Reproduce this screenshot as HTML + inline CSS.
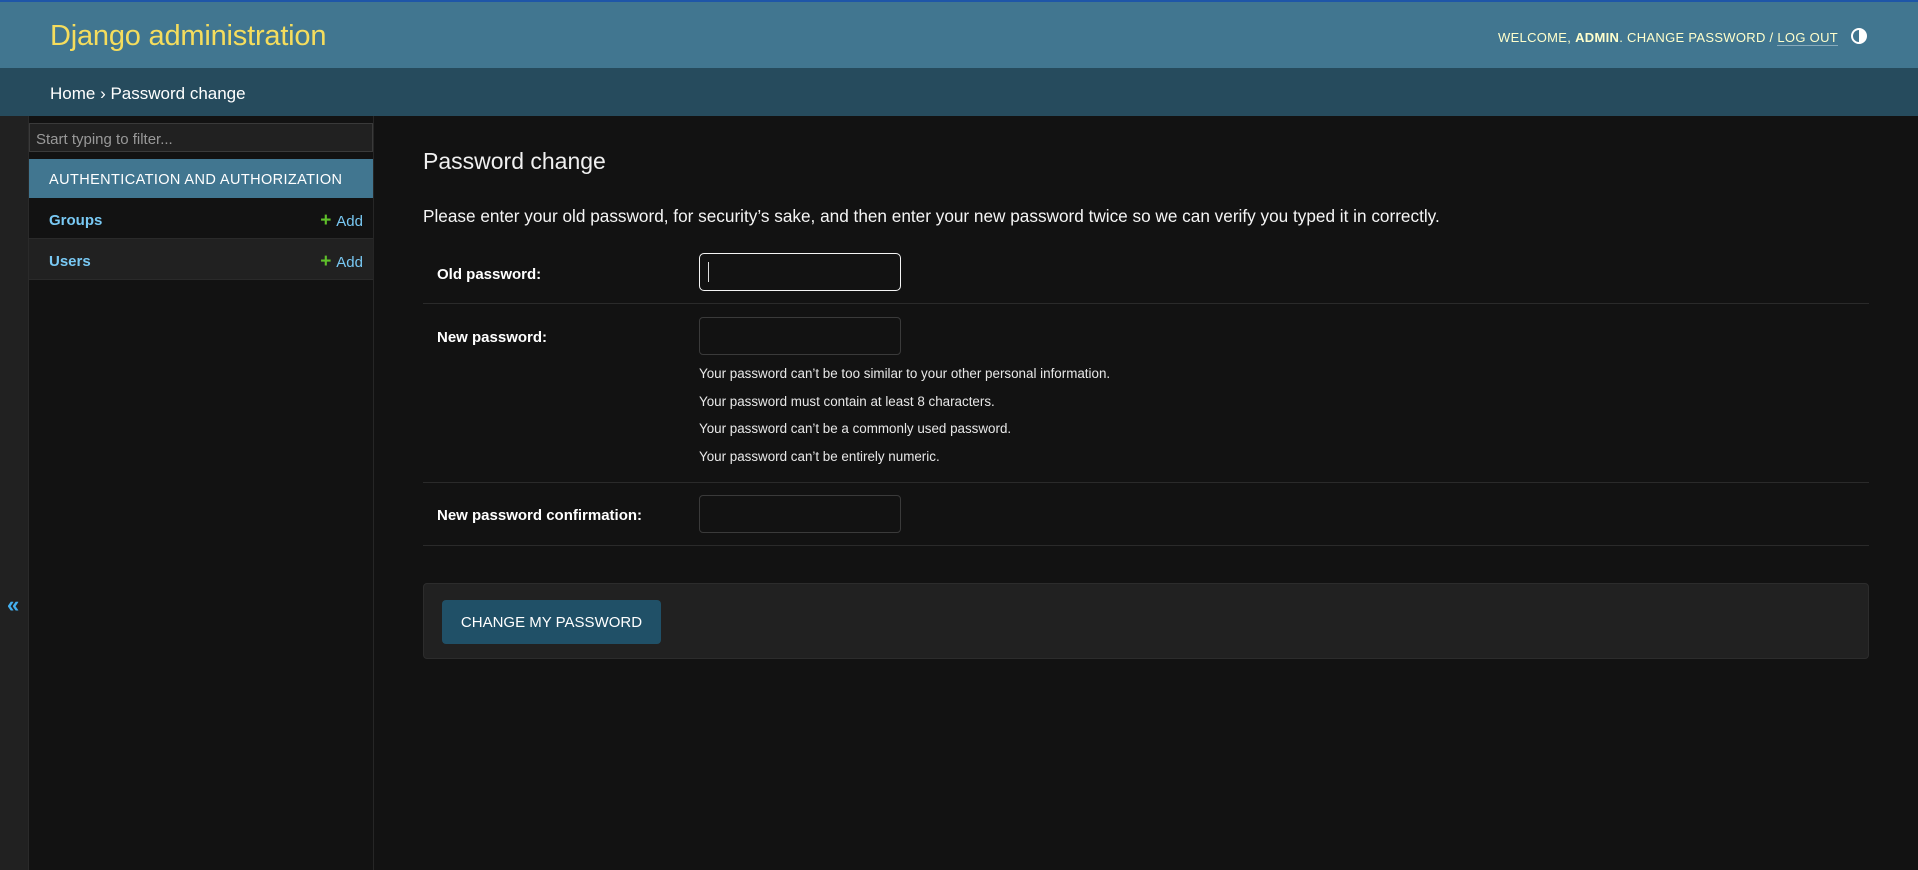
<!DOCTYPE html>
<html><head><meta charset="utf-8"><style>
*{box-sizing:border-box;margin:0;padding:0}
body{width:1918px;height:870px;background:#121212;font-family:"Liberation Sans",sans-serif;color:#eee;position:relative;overflow:hidden}
.topline{position:absolute;left:0;top:0;width:1918px;height:2px;background:#1e56a8}
.header{position:absolute;left:0;top:2px;width:1918px;height:66px;background:#417690}
.title{position:absolute;left:50px;top:18px;font-size:29px;color:#f5dd5d;letter-spacing:-0.2px}
.tools{position:absolute;right:80px;top:28px;font-size:13px;color:#ffffcc;letter-spacing:0.3px}
.tools b{font-weight:bold}
.tools u{text-decoration:none;border-bottom:1px solid #8ab}
.theme{position:absolute;left:1851px;top:28px;width:16px;height:16px;border-radius:50%;border:2px solid #fff;background:linear-gradient(90deg,#417690 50%,#fff 50%)}
.crumbs{position:absolute;left:0;top:68px;width:1918px;height:48px;background:#264b5d;font-size:17px;color:#fff;padding:16px 0 0 50px}
.toggle{position:absolute;left:0;top:116px;width:29px;height:754px;background:#212121;border-right:1px solid #2a2a2a}
.toggle span{position:absolute;left:7px;top:476px;color:#44b0f0;font-size:22px;font-weight:bold}
.nav{position:absolute;left:29px;top:116px;width:345px;height:754px;border-right:1px solid #262626}
.filter{position:absolute;left:0;top:7px;width:344px;height:29px;border:1px solid #3a3a3a;background:#212121;color:#999;font-size:15px;padding:7px 6px 0}
.cap{position:absolute;left:0;top:43px;width:344px;height:39px;background:#417690;color:#fff;font-size:14.5px;padding:13px 0 0 20px;letter-spacing:0.4px}
.row{position:absolute;left:0;width:344px;height:41px;border-bottom:1px solid #2a2a2a;font-size:15px}
.row .n{position:absolute;left:20px;top:14px;color:#79c9f4;font-weight:bold}
.row .a{position:absolute;right:10px;top:12px;color:#79c9f4}
.row .a b{color:#5fc02a;font-size:19px;margin-right:5px}
.h1{position:absolute;left:423px;top:148px;font-size:23px;font-weight:300;color:#f0f0f0}
.p{position:absolute;left:423px;top:206px;font-size:17.2px;color:#f5f5f5}
.frow{position:absolute;left:423px;width:1446px;border-bottom:1px solid #2a2a2a}
.lbl{position:absolute;left:14px;font-size:15px;font-weight:bold;color:#fff}
.inp{position:absolute;left:276px;width:202px;height:38px;border:1px solid #3a3a3a;border-radius:4px;background:#121212}
.inp.f{border:1.5px solid #f5f5f5;border-radius:5px}
.inp.f:after{content:"";position:absolute;left:8px;top:8px;width:1px;height:20px;background:#ddd}
.help{position:absolute;left:276px;font-size:13.4px;color:#e8e8e8}
.submit{position:absolute;left:423px;top:583px;width:1446px;height:76px;background:#212121;border:1px solid #2c2c2c;border-radius:4px}
.btn{position:absolute;left:18px;top:16px;width:219px;height:44px;background:#205067;border-radius:4px;color:#fff;font-size:15px;text-align:center;line-height:46px}
</style></head><body>
<div class="topline"></div>
<div class="header"><div class="title">Django administration</div>
<div class="tools">WELCOME, <b>ADMIN</b>. CHANGE PASSWORD / <u>LOG OUT</u></div></div>
<div class="theme"></div>
<div class="crumbs">Home › Password change</div>
<div class="toggle"><span>«</span></div>
<div class="nav">
<div class="filter">Start typing to filter...</div>
<div class="cap">AUTHENTICATION AND AUTHORIZATION</div>
<div class="row" style="top:82px;background:#121212"><span class="n">Groups</span><span class="a"><b>+</b>Add</span></div>
<div class="row" style="top:123px;background:#212121"><span class="n">Users</span><span class="a"><b>+</b>Add</span></div>
</div>
<div class="h1">Password change</div>
<div class="p">Please enter your old password, for security’s sake, and then enter your new password twice so we can verify you typed it in correctly.</div>
<div class="frow" style="top:248px;height:56px"><div class="lbl" style="top:18px">Old password:</div><div class="inp f" style="top:5px"></div></div>
<div class="frow" style="top:304px;height:179px"><div class="lbl" style="top:25px">New password:</div><div class="inp" style="top:13px"></div>
<div class="help" style="top:62px">Your password can’t be too similar to your other personal information.</div>
<div class="help" style="top:90px">Your password must contain at least 8 characters.</div>
<div class="help" style="top:117px">Your password can’t be a commonly used password.</div>
<div class="help" style="top:145px">Your password can’t be entirely numeric.</div></div>
<div class="frow" style="top:483px;height:63px"><div class="lbl" style="top:24px">New password confirmation:</div><div class="inp" style="top:12px"></div></div>
<div class="submit"><div class="btn">CHANGE MY PASSWORD</div></div>
</body></html>
